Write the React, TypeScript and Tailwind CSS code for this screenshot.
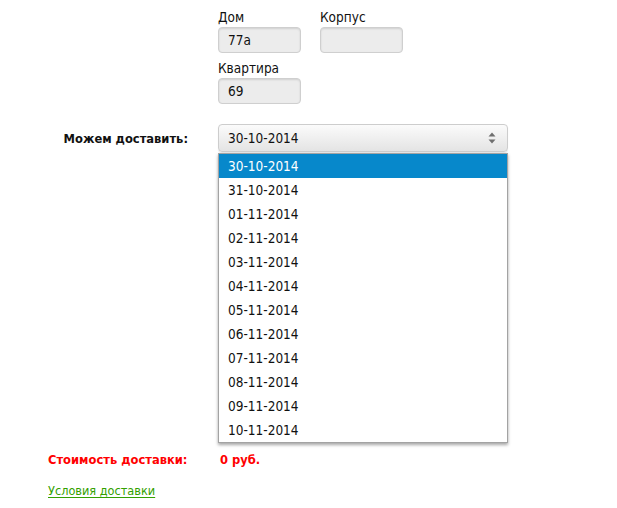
const dates = [
  '30-10-2014',
  '31-10-2014',
  '01-11-2014',
  '02-11-2014',
  '03-11-2014',
  '04-11-2014',
  '05-11-2014',
  '06-11-2014',
  '07-11-2014',
  '08-11-2014',
  '09-11-2014',
  '10-11-2014',
]

function Field({ label, value }: { label: string; value: string }) {
  return (
    <div className="flex flex-col">
      <label className="h-[19px] leading-[19px] text-[#111]">{label}</label>
      <div className="h-[26px] w-[83px] rounded-[4px] border border-[#cfcfcf] bg-[#ececec] pl-[9px] leading-[24px] text-[#111] shadow-[inset_0_1px_2px_rgba(0,0,0,0.12)]">
        {value}
      </div>
    </div>
  )
}

function SelectArrows() {
  return (
    <svg width="8" height="12" viewBox="0 0 8 12" className="text-[#6f6f6f]">
      <path d="M4 0.5 L7.5 4.5 H0.5 Z" fill="currentColor" />
      <path d="M4 11.5 L7.5 7.5 H0.5 Z" fill="currentColor" />
    </svg>
  )
}

export default function App() {
  return (
    <div
      className="min-h-screen bg-white text-[13.5px]"
      style={{ fontFamily: '"DejaVu Sans Condensed", "DejaVu Sans", sans-serif' }}
    >
      {/* Address fields */}
      <div className="pl-[218px] pt-[8px]">
        <div className="flex gap-[19px]">
          <Field label="Дом" value="77a" />
          <Field label="Корпус" value="" />
        </div>
        <div className="mt-[6px]">
          <Field label="Квартира" value="69" />
        </div>
      </div>

      {/* Delivery date */}
      <div className="mt-[20px] flex">
        <div className="w-[218px] pr-[30px] pt-[5px] text-right text-[12.8px] font-bold text-[#111]">
          Можем доставить:
        </div>
        <div className="relative w-[290px]">
          <div className="flex h-[28px] items-center justify-between rounded-[4px] border border-[#cdcdcd] bg-gradient-to-b from-[#fbfbfb] to-[#e4e4e4] pl-[9px] pr-[11px] text-[#111] shadow-[0_1px_1px_rgba(0,0,0,0.1)]">
            <span>30-10-2014</span>
            <SelectArrows />
          </div>
          <ul className="absolute left-0 top-[29px] w-[290px] border border-[#a3a3a3] bg-white shadow-[0_2px_3px_rgba(0,0,0,0.35)]">
            {dates.map((d, i) => (
              <li
                key={d}
                className={`h-[24px] pl-[9px] leading-[24px] ${i === 0 ? 'bg-[#0788cb] text-white' : 'text-[#111]'}`}
              >
                {d}
              </li>
            ))}
          </ul>
        </div>
      </div>

      {/* Cost */}
      <div className="mt-[298px] flex text-[12.8px] font-bold text-[#ff0000]">
        <div className="w-[220px] pl-[48px]">Стоимость доставки:</div>
        <div>0 руб.</div>
      </div>

      <div className="mt-[13px] pl-[48px] text-[12.6px]">
        <a href="#" className="text-[#33a000] underline underline-offset-2">
          Условия доставки
        </a>
      </div>
    </div>
  )
}
